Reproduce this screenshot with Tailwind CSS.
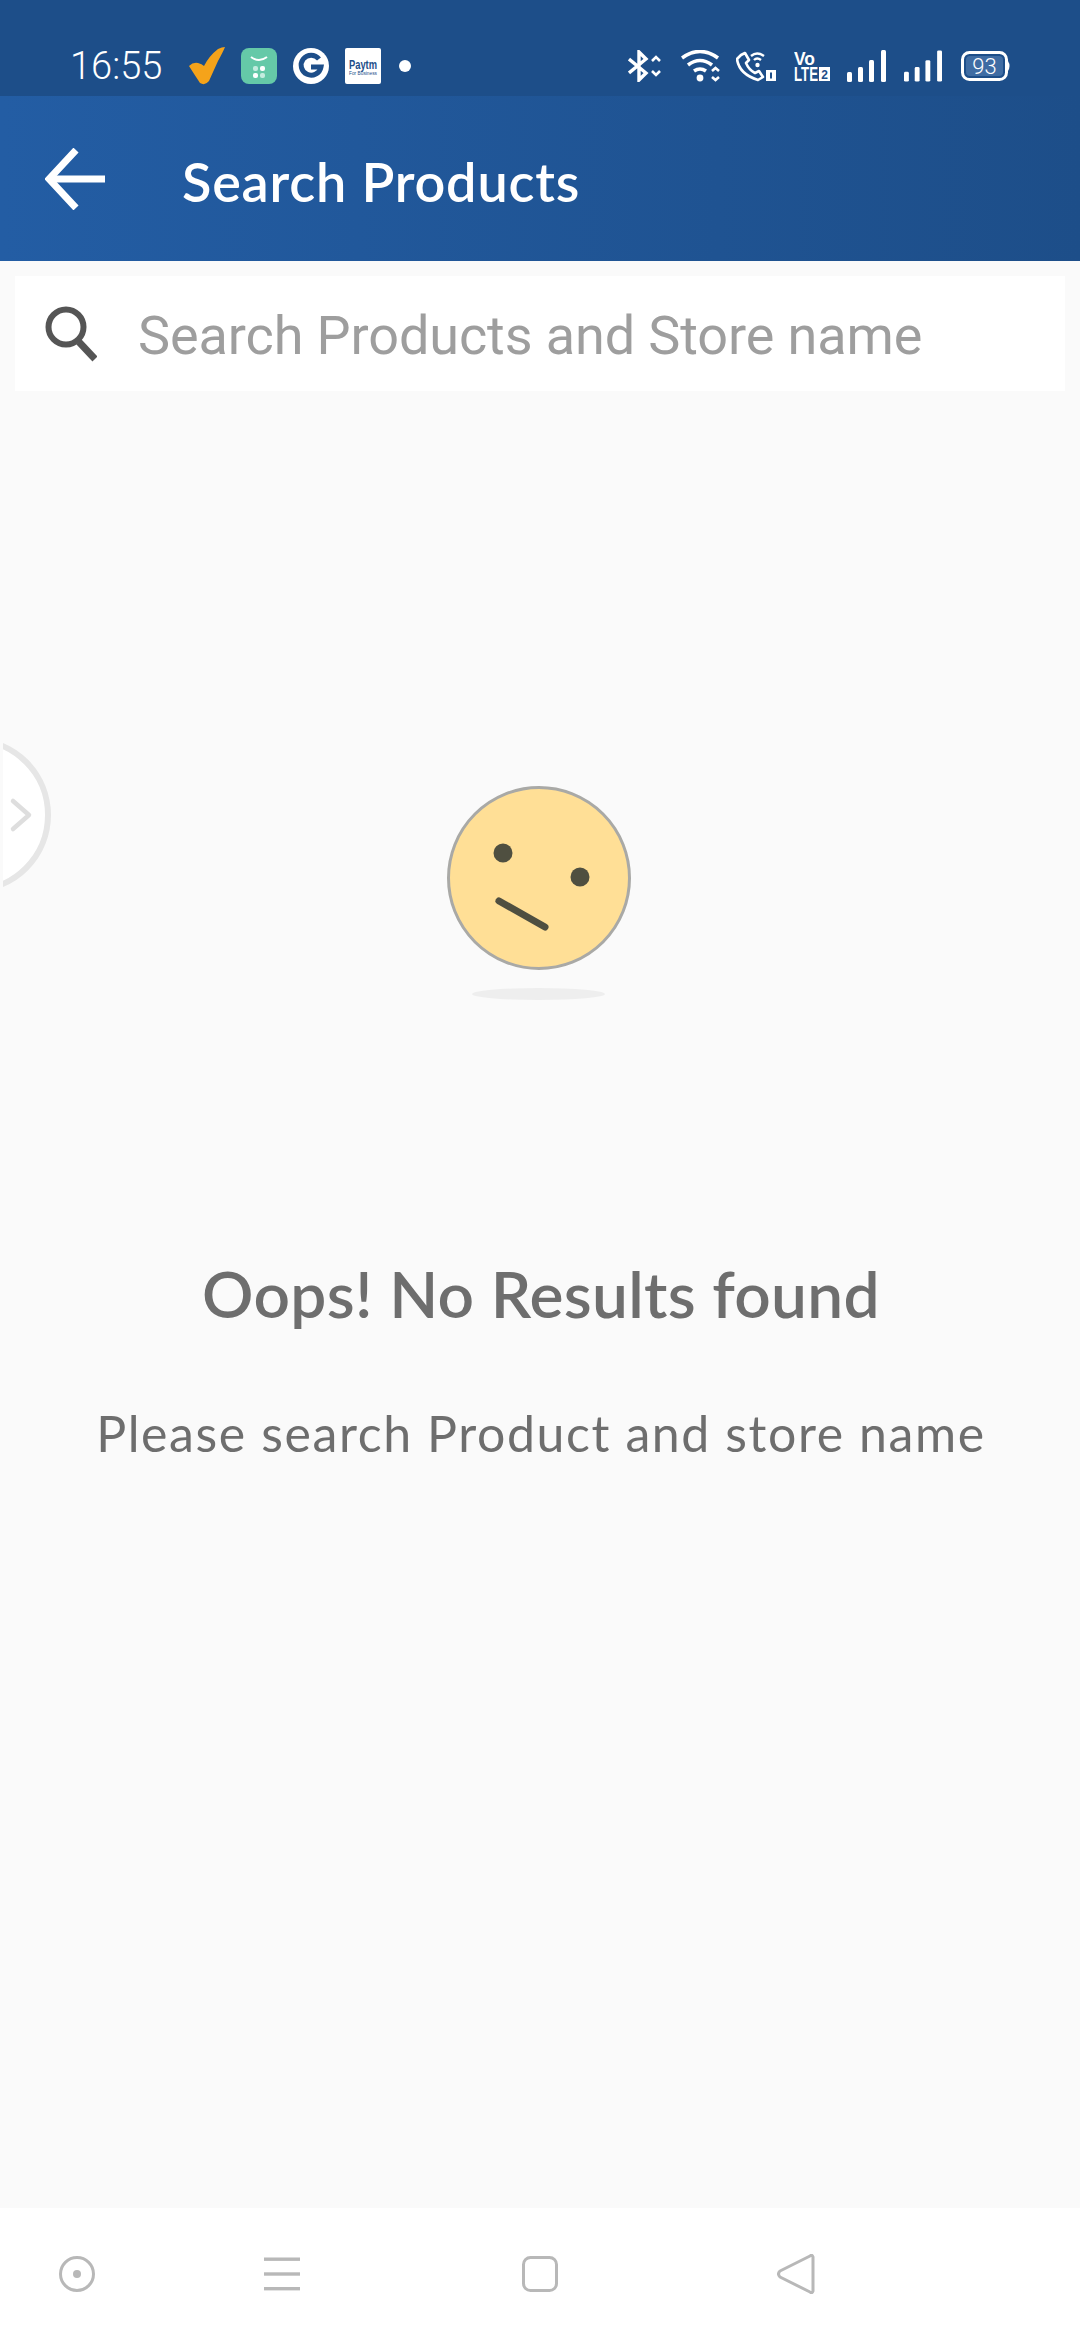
<!doctype html>
<html lang="en">
<head>
<meta charset="utf-8">
<script src="https://cdn.jsdelivr.net/npm/@tailwindcss/browser@4"></script>
</head>
<body class="w-[1080px] h-[2340px] overflow-hidden bg-[#fafafa] font-['Lato',sans-serif]">
<div class="relative flex flex-col h-full">

  <!-- status bar -->
  <div class="flex items-center h-[96px] pt-[36px] pl-[70px] bg-[#1d4e89] text-white shrink-0">
    <span class="w-[119px] font-['Roboto',sans-serif] font-light text-[38px] leading-[56px]">16:55</span>
    <svg class="w-[36px] h-[40px]" viewBox="0 0 36 40"><path d="M0 20 Q4 16 9 17 Q13 18 15 20 Q20 10 29 3 Q33 1 36 1 Q34 6 29 15 Q24 26 20 35 Q16 40 11 37 Q5 28 0 20 Z" fill="#f5a31a"/></svg>
    <svg class="ml-[16px] w-[36px] h-[36px]" viewBox="0 0 36 36">
      <rect width="36" height="36" rx="8" fill="#65c9a8"/>
      <path d="M10 9 Q18 15 26 9" fill="none" stroke="#fff" stroke-width="2"/>
      <rect x="12" y="18" width="5" height="5" rx="2" fill="#c4ecdf"/><rect x="19" y="18" width="5" height="5" rx="2" fill="#fff"/>
      <rect x="12" y="25" width="5" height="5" rx="2" fill="#fff"/><rect x="19" y="25" width="5" height="5" rx="2" fill="#c4ecdf"/>
    </svg>
    <svg class="ml-[16px] w-[36px] h-[36px]" viewBox="0 0 36 36">
      <circle cx="18" cy="18" r="18" fill="#fff"/>
      <path d="M26 11 A10 10 0 1 0 28 19 H18" fill="none" stroke="#1d4e89" stroke-width="5"/>
    </svg>
    <svg class="ml-[16px] w-[36px] h-[36px]" viewBox="0 0 36 36">
      <rect width="36" height="36" rx="2" fill="#fff"/>
      <text x="4" y="21" font-family="Liberation Sans" font-weight="700" font-size="13" fill="#1d4e89" textLength="28" lengthAdjust="spacingAndGlyphs">Paytm</text>
      <text x="4" y="27" font-family="Liberation Sans" font-size="5.5" fill="#1d4e89" textLength="28" lengthAdjust="spacingAndGlyphs">For Business</text>
    </svg>
    <span class="ml-[18px] w-[12px] h-[12px] rounded-full bg-white"></span>

    <!-- right icons -->
    <svg class="ml-[217px] w-[33px] h-[32px]" viewBox="0 0 33 32" fill="none" stroke="#fff" stroke-width="3.4">
      <path d="M1 9 L18 23 L11 30 V2 L18 9 L1 23"/>
      <path d="M24 11 L28 7 L32 11 M24 21 L28 25 L32 21" stroke-width="2.6"/>
    </svg>
    <svg class="ml-[20px] w-[40px] h-[32px]" viewBox="0 0 40 32" fill="none" stroke="#fff" stroke-width="3.6">
      <path d="M1 8 Q19 -5 37 8"/><path d="M7 15 Q19 6 31 15"/><path d="M13 21 Q19 17 25 21"/>
      <circle cx="19" cy="28" r="3.4" fill="#fff" stroke="none"/>
      <path d="M31 21 L34.5 18 L38 21 M31 27 L34.5 30 L38 27" stroke-width="2.6"/>
    </svg>
    <svg class="ml-[15px] w-[40px] h-[32px]" viewBox="0 0 40 32" fill="none" stroke="#fff">
      <path d="M5 5 L9 3 L13 10 L10 13 Q13 20 19 23 L23 21 L27 27 L22 30 Q3 24 1 9 Z" stroke-width="2.6" stroke-linejoin="round"/>
      <path d="M15 6 Q21 1 28 6 M18 10 Q21 7 25 10" stroke-width="2.4"/>
      <circle cx="21.5" cy="15" r="2.2" fill="#fff" stroke="none"/>
      <rect x="30" y="20" width="10" height="11" fill="#fff" stroke="none"/><rect x="34" y="22.5" width="2" height="6" fill="#1d4e89" stroke="none"/>
    </svg>
    <svg class="ml-[18px] w-[36px] h-[32px]" viewBox="0 0 36 32">
      <text x="0" y="15" font-family="Liberation Sans" font-weight="700" font-size="19" fill="#fff" textLength="21" lengthAdjust="spacingAndGlyphs">Vo</text>
      <text x="0" y="31" font-family="Liberation Sans" font-weight="700" font-size="20" fill="#fff" textLength="24" lengthAdjust="spacingAndGlyphs">LTE</text>
      <rect x="25" y="17" width="11" height="14" fill="#fff"/>
      <text x="30.5" y="29" text-anchor="middle" font-family="Liberation Sans" font-weight="700" font-size="12" fill="#1d4e89">2</text>
    </svg>
    <svg class="ml-[17px] w-[39px] h-[32px]" viewBox="0 0 39 32" fill="#fff">
      <rect x="0" y="22" width="5" height="10" rx="1.5"/><rect x="11" y="17" width="5" height="15" rx="1.5"/><rect x="22" y="10" width="5" height="22" rx="1.5"/><rect x="34" y="0" width="5" height="32" rx="1.5"/>
    </svg>
    <svg class="ml-[18px] w-[38px] h-[32px]" viewBox="0 0 39 32" fill="#fff">
      <rect x="0" y="22" width="5" height="10" rx="1.5"/><rect x="11" y="17" width="5" height="15" rx="1.5"/><rect x="22" y="10" width="5" height="22" rx="1.5"/><rect x="34" y="0" width="5" height="32" rx="1.5"/>
    </svg>
    <svg class="ml-[19px] w-[50px] h-[30px]" viewBox="0 0 50 30">
      <rect x="1.5" y="1.5" width="44" height="27" rx="7" fill="none" stroke="#fff" stroke-width="3"/>
      <rect x="5" y="5" width="37" height="20" rx="4" fill="#3f6ca3"/>
      <path d="M47 10 Q50 15 47 20 Z" fill="#fff"/>
      <text x="23.5" y="23" text-anchor="middle" font-family="Roboto" font-weight="300" font-size="22" fill="#fff">93</text>
    </svg>
  </div>

  <!-- header -->
  <div class="flex items-center h-[165px] pl-[45px] bg-gradient-to-r from-[#235da4] to-[#1d4e89] shrink-0">
    <svg class="w-[60px] h-[62px]" viewBox="0 0 60 62" fill="none" stroke="#fff" stroke-width="7">
      <path d="M31 2 L4 31 L31 60"/><path d="M4 31 H60"/>
    </svg>
    <h1 class="ml-[77px] pt-[7px] text-white font-semibold text-[54px] leading-none tracking-[0.8px]">Search Products</h1>
  </div>

  <!-- search -->
  <div class="mx-[15px] mt-[15px] h-[115px] flex items-center pl-[30px] bg-white shrink-0">
    <svg class="w-[52px] h-[56px]" viewBox="0 0 52 56" fill="none" stroke="#555" >
      <circle cx="21" cy="21" r="17.5" stroke-width="6"/>
      <path d="M34 36 L50 53" stroke-width="7"/>
    </svg>
    <span class="ml-[41px] pt-[5px] font-['Roboto',sans-serif] text-[#9e9e9e] text-[54px] leading-none tracking-[-0.1px]">Search Products and Store name</span>
  </div>

  <!-- empty state -->
  <div class="flex flex-col items-center flex-1 pt-[395px] pr-[2px]">
    <svg class="w-[184px] h-[184px]" viewBox="0 0 184 184">
      <circle cx="92" cy="92" r="90.5" fill="#ffdf96" stroke="#a9a9a6" stroke-width="3"/>
      <circle cx="56" cy="67" r="9.5" fill="#4f4f40"/>
      <circle cx="133" cy="91" r="9.5" fill="#4f4f40"/>
      <path d="M52 115 L98 141" stroke="#4f4f40" stroke-width="7" stroke-linecap="round"/>
    </svg>
    <div class="mt-[18px] mr-[2px] w-[133px] h-[12px] rounded-[50%] bg-[#eeeeee]"></div>
    <h2 class="mt-[258px] ml-[4px] font-semibold text-[#6e6e6e] text-[64px] leading-[72px] tracking-[0.3px]">Oops! No Results found</h2>
    <p class="mt-[71px] ml-[4px] text-[#6e6e6e] text-[50px] leading-[64px] tracking-[1.6px]">Please search Product and store name</p>
  </div>

  <!-- nav bar -->
  <div class="relative h-[132px] bg-white shrink-0">
    <svg class="absolute left-[59px] top-[48px] w-[36px] h-[36px]" viewBox="0 0 36 36" fill="none" stroke="#b8b8b8" stroke-width="3">
      <circle cx="18" cy="18" r="16.5"/><circle cx="18" cy="18" r="4" fill="#b8b8b8" stroke="none"/>
    </svg>
    <svg class="absolute left-[264px] top-[49px] w-[36px] h-[34px]" viewBox="0 0 36 34" fill="#b8b8b8">
      <rect y="0.5" width="36" height="3.4"/><rect y="15.3" width="36" height="3.4"/><rect y="30" width="36" height="3.4"/>
    </svg>
    <svg class="absolute left-[522px] top-[48px] w-[36px] h-[36px]" viewBox="0 0 36 36" fill="none" stroke="#b8b8b8" stroke-width="3">
      <rect x="1.5" y="1.5" width="33" height="33" rx="7"/>
    </svg>
    <svg class="absolute left-[777px] top-[46px] w-[38px] h-[40px]" viewBox="0 0 38 40" fill="none" stroke="#b8b8b8" stroke-width="3" stroke-linejoin="round">
      <path d="M36 3 Q35 0 33 2 L3 17 Q0 20 3 23 L33 38 Q35 40 36 37 Z"/>
    </svg>
  </div>

  <!-- side handle -->
  <svg class="absolute left-[3px] top-[735px] w-[50px] h-[160px]" viewBox="0 0 50 160" fill="none">
    <circle cx="-30" cy="80" r="75" fill="#fff" stroke="#e6e6e6" stroke-width="6"/>
    <path d="M10 66 L26 80 L10 94" stroke="#dedede" stroke-width="4.5" stroke-linecap="round" stroke-linejoin="round"/>
  </svg>
</div>
</body>
</html>
